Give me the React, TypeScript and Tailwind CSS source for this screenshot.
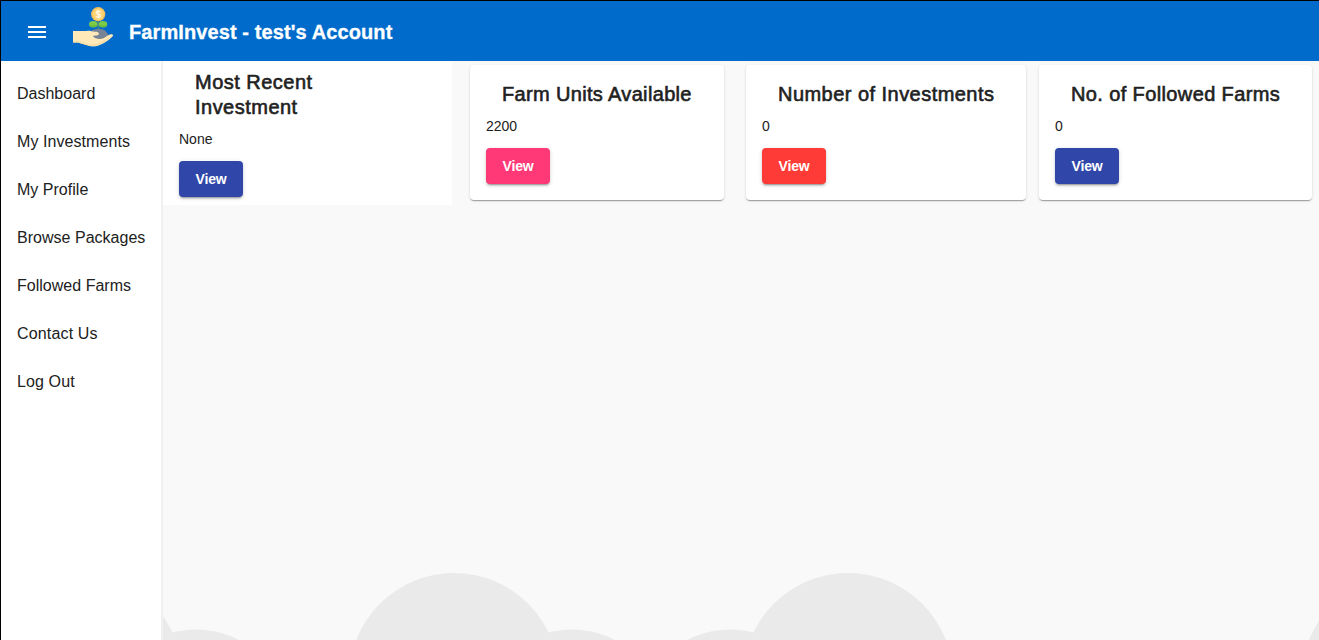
import React from "react";

const links: [string, string][] = [
  ["Dashboard", "tracking-[0px]"],
  ["My Investments", "tracking-[0.07px]"],
  ["My Profile", "tracking-[0.02px]"],
  ["Browse Packages", "tracking-[0.02px]"],
  ["Followed Farms", "tracking-[0.02px]"],
  ["Contact Us", "tracking-[0.16px]"],
  ["Log Out", "tracking-[0.12px]"],
];

const elevated =
  "rounded-[4px] shadow-[0_2px_1px_-1px_rgba(0,0,0,0.2),0_1px_1px_0_rgba(0,0,0,0.14),0_1px_3px_0_rgba(0,0,0,0.12)]";

function Logo() {
  return (
    <svg className="h-10 w-10" viewBox="0 0 40 40">
      <path d="M24.6 14v9h1.2v-9z" fill="#5a8f6a" />
      <path d="M18.5 24c2.5-2 11-4 15 1 1.200 1.500 2 3.500 2.200 5.500L27 35l-9-3z" fill="#788494" />
      <path
        d="M0 24h13c2.500 0 3.500-.4 5.500.2 2 .7 4.500.2 6.200.9 1.500.7 1.600 2.700-.3 3.200-1.500.4-3.400 0-4.400.9 2 2.500 6.500 3.500 10.500 2 3-1.200 4.500-3.500 7.300-3.900 2-.3 2.800 1 1.700 2.200-2.700 3-6.200 5.200-10 7.300-4.500 2.600-9.500 3.500-14.500 1.700L4.800 35.400H0z"
        fill="#ffe9b9"
      />
      <path
        d="M0 34h5l9 2.900c4.500 1.300 9.700.6 13.800-1.800l10.200-5.600c-2.400 2.900-5.600 5-8.500 6.600-4.500 2.600-9.500 3.500-14.500 2.400L4.800 35.400H0z"
        fill="#f8dca4"
      />
      <ellipse cx="20.3" cy="17.2" rx="4.200" ry="3.200" fill="#7ccc4a" />
      <ellipse cx="30" cy="17.200" rx="4.200" ry="3.200" fill="#7ccc4a" />
      <path
        d="M16.200 17.800c2 1 5.800 1 8.200 0-1.400 3.300-6.800 3.300-8.200 0zM25.900 17.800c2 1 5.800 1 8.200 0-1.400 3.300-6.800 3.300-8.200 0z"
        fill="#66bb38"
      />
      <circle cx="25.200" cy="7.200" r="7.100" fill="#f4c25c" />
      <circle cx="25.200" cy="7.200" r="5.700" fill="#ffd477" />
      <path
        d="M27.300 5.200c-.4-.8-1.200-1-2.100-1-1.200 0-2 .6-2 1.500 0 2 4.200 1 4.200 3.100 0 1-1 1.600-2.100 1.600-1.200 0-2-.4-2.300-1.300M25.200 3v8.500"
        fill="none"
        stroke="#fff9e8"
        strokeWidth="1.200"
      />
    </svg>
  );
}

function Card({
  title,
  value,
  box,
  button,
  tracking,
}: {
  title: string;
  value: string;
  box: string;
  button: string;
  tracking: string;
}) {
  return (
    <section className={`shrink-0 bg-white px-4 ${box}`}>
      <h2
        className={`px-4 text-[20px] leading-[25px] [-webkit-text-stroke:0.6px_#212121] ${tracking}`}
      >
        {title}
      </h2>
      <p className="mt-[9px] text-[14px] leading-5">{value}</p>
      <button
        className={`mt-3 block h-9 w-16 rounded-[4px] text-[14px] font-bold leading-9 tracking-[-0.15px] text-white shadow-[0_3px_1px_-2px_rgba(0,0,0,0.2),0_2px_2px_0_rgba(0,0,0,0.14),0_1px_5px_0_rgba(0,0,0,0.12)] ${button}`}
      >
        View
      </button>
    </section>
  );
}

export default function App() {
  return (
    <div className="flex h-[640px] w-[1319px] flex-col overflow-hidden border-l border-t border-black bg-[#f9f9f9] font-['Liberation_Sans',Arial,sans-serif] text-[#212121]">
      <header className="flex h-[60px] shrink-0 items-center bg-[#006bcb] pl-6 pt-0.5 text-white">
        <button aria-label="Menu" className="h-6 w-6">
          <svg className="h-6 w-6" viewBox="0 0 24 24" fill="currentColor">
            <path d="M3 18h18v-2H3v2zm0-5h18v-2H3v2zm0-7v2h18V6H3z" />
          </svg>
        </button>
        <div className="-mt-[10px] ml-6">
          <Logo />
        </div>
        <h1 className="ml-4 text-[20px] font-bold leading-8 tracking-[0.1px] [-webkit-text-stroke:0.3px_white]">
          FarmInvest - test's Account
        </h1>
      </header>
      <div className="flex min-h-0 flex-1">
        <nav className="w-[162px] shrink-0 border-r-2 border-[#f0f0f0] bg-white pt-[9px]">
          {links.map(([label, tracking]) => (
            <a key={label} className={`flex h-12 items-center whitespace-nowrap pl-4 text-[16px] ${tracking}`}>
              {label}
            </a>
          ))}
        </nav>
        <main className="relative flex min-w-0 flex-1 items-start">
          <svg
            className="pointer-events-none absolute bottom-0 left-0 h-[80px] w-[1156px]"
            viewBox="163 560 1156 80"
            fill="#eaeaea"
          >
            <circle cx="78" cy="678" r="105" />
            <circle cx="196" cy="722.5" r="93" />
            <circle cx="454" cy="678" r="105" />
            <circle cx="572" cy="722.5" r="93" />
            <circle cx="730" cy="722.5" r="93" />
            <circle cx="848" cy="678" r="105" />
            <circle cx="1407" cy="678" r="105" />
          </svg>
          <Card
            title="Most Recent Investment"
            value="None"
            box="h-36 w-[289px] pr-[110px] pt-[9px]"
            button="bg-[#3046a8]"
            tracking="tracking-[0.48px]"
          />
          <Card
            title="Farm Units Available"
            value="2200"
            box={`ml-[18px] mt-1 h-[135px] w-[254px] whitespace-nowrap pt-[17px] ${elevated}`}
            button="bg-[#ff3877]"
            tracking="tracking-[0.34px]"
          />
          <Card
            title="Number of Investments"
            value="0"
            box={`ml-[22px] mt-1 h-[135px] w-[280px] whitespace-nowrap pt-[17px] ${elevated}`}
            button="bg-[#ff3b37]"
            tracking="tracking-[0.46px]"
          />
          <Card
            title="No. of Followed Farms"
            value="0"
            box={`ml-[13px] mt-1 h-[135px] w-[273px] whitespace-nowrap pt-[17px] ${elevated}`}
            button="bg-[#3046a8]"
            tracking="tracking-[0.38px]"
          />
        </main>
      </div>
    </div>
  );
}
